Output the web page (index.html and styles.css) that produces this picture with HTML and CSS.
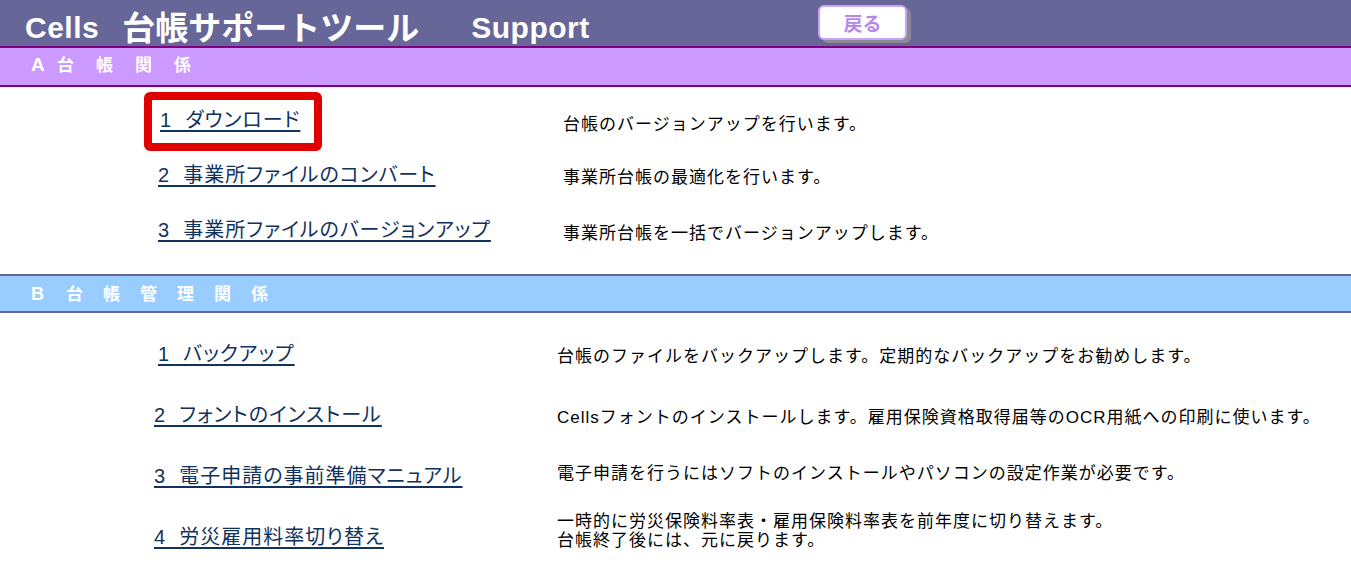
FILE: index.html
```html
<!DOCTYPE html>
<html lang="ja">
<head>
<meta charset="utf-8">
<title>Cells 台帳サポートツール Support</title>
<link rel="stylesheet" href="styles.css">
</head>
<body>
<header class="topbar">
  <h1 class="title"><span class="title-latin title-cells">Cells</span><span class="title-jp">台帳サポートツール</span><span class="title-latin">Support</span></h1>
  <a class="back-btn" href="#">戻る</a>
</header>

<section class="section section-a">
  <h2 class="section-head">
    <span class="section-letter">A</span><span>台</span><span>帳</span><span>関</span><span>係</span>
  </h2>
  <div class="rows rows-a">
    <div class="link-cell link-cell-boxed">
      <span class="highlight"><a class="item-link" href="#">1&nbsp;&nbsp;ダウンロード</a></span>
    </div>
    <p class="desc">台帳のバージョンアップを行います。</p>

    <div class="link-cell">
      <a class="item-link" href="#">2&nbsp;&nbsp;事業所ファイルのコンバート</a>
    </div>
    <p class="desc">事業所台帳の最適化を行います。</p>

    <div class="link-cell">
      <a class="item-link" href="#">3&nbsp;&nbsp;事業所ファイルのバージョンアップ</a>
    </div>
    <p class="desc">事業所台帳を一括でバージョンアップします。</p>
  </div>
</section>

<section class="section section-b">
  <h2 class="section-head">
    <span class="section-letter">B</span><span>台</span><span>帳</span><span>管</span><span>理</span><span>関</span><span>係</span>
  </h2>
  <div class="rows rows-b">
    <div class="link-cell link-cell-wide">
      <a class="item-link" href="#">1&nbsp;&nbsp;バックアップ</a>
    </div>
    <p class="desc">台帳のファイルをバックアップします。定期的なバックアップをお勧めします。</p>

    <div class="link-cell">
      <a class="item-link" href="#">2&nbsp;&nbsp;フォントのインストール</a>
    </div>
    <p class="desc">Cellsフォントのインストールします。雇用保険資格取得届等のOCR用紙への印刷に使います。</p>

    <div class="link-cell">
      <a class="item-link" href="#">3&nbsp;&nbsp;電子申請の事前準備マニュアル</a>
    </div>
    <p class="desc desc-raised">電子申請を行うにはソフトのインストールやパソコンの設定作業が必要です。</p>

    <div class="link-cell">
      <a class="item-link" href="#">4&nbsp;&nbsp;労災雇用料率切り替え</a>
    </div>
    <p class="desc desc-two"><span class="desc-line">一時的に労災保険料率表・雇用保険料率表を前年度に切り替えます。</span><span class="desc-line">台帳終了後には、元に戻ります。</span></p>
  </div>
</section>
</body>
</html>
```

FILE: styles.css
```css
html, body {
  margin: 0;
  padding: 0;
  background: #ffffff;
  overflow: hidden;
}

body {
  font-family: "Noto Sans CJK JP", "Liberation Sans", sans-serif;
  color: #000000;
}

/* ---------- top bar ---------- */
.topbar {
  display: grid;
  grid-template-columns: 793px 89px;
  align-items: start;
  height: 46px;
  padding-left: 25px;
  background: #666699;
  border-bottom: 2px solid #800080;
}

.title {
  margin: 2px 0 0 0;
  color: #ffffff;
  font-weight: bold;
  line-height: 44px;
  white-space: nowrap;
}

.title-latin {
  font-family: "Liberation Sans", "Noto Sans CJK JP", sans-serif;
  font-size: 30px;
  font-weight: bold;
  letter-spacing: 0.5px;
}

.title-cells {
  margin-right: 23px;
}

.title-jp {
  font-family: "Noto Sans CJK JP", sans-serif;
  font-size: 33px;
  font-weight: bold;
  margin-right: 52px;
  vertical-align: -2px;
}

.back-btn {
  box-sizing: border-box;
  display: flex;
  align-items: center;
  justify-content: center;
  margin-top: 5px;
  width: 89px;
  height: 35px;
  background: #ffffff;
  border: 2px solid #c9a3f7;
  border-radius: 6px;
  box-shadow: 4px 3px 0 #8a8a96;
  color: #b48ae8;
  font-family: "Noto Sans CJK JP", sans-serif;
  font-size: 19px;
  font-weight: bold;
  text-decoration: none;
  line-height: 1;
}

/* ---------- sections ---------- */
.section-head {
  box-sizing: border-box;
  margin: 0;
  display: flex;
  align-items: baseline;
  padding-left: 31px;
  color: #ffffff;
  font-family: "Noto Sans CJK JP", sans-serif;
  font-size: 17px;
  font-weight: bold;
}

.section-letter {
  font-family: "Liberation Sans", sans-serif;
  font-size: 19px;
}

.section-a .section-head {
  height: 39px;
  line-height: 31px;
  gap: 22px;
  background: #cc99ff;
  border-bottom: 2px solid #800080;
}

.section-a .section-letter {
  width: 4px;
}

.section-b .section-head {
  height: 39px;
  line-height: 34px;
  gap: 20px;
  background: #99ccff;
  border-top: 2px solid #666699;
  border-bottom: 2px solid #666699;
}

.section-b .section-letter {
  width: 15px;
  font-size: 18px;
}

/* ---------- rows ---------- */
.rows {
  display: grid;
  align-items: center;
}

.rows-a {
  grid-template-columns: 563px 1fr;
  grid-template-rows: 59px 47px 64px;
  padding-top: 5px;
  padding-bottom: 12px;
}

.rows-b {
  grid-template-columns: 557px 1fr;
  grid-auto-rows: 61px;
  padding-top: 10px;
}

.link-cell {
  padding-left: 158px;
  white-space: nowrap;
}

.rows-a .link-cell-boxed {
  padding-left: 144px;
}

.rows-b .link-cell {
  padding-left: 154px;
}

.rows-b .link-cell-wide {
  padding-left: 158px;
}

.highlight {
  display: inline-block;
  box-sizing: border-box;
  width: 178px;
  height: 59px;
  padding: 6px 8px 0 8px;
  border: 8px solid #e00000;
  border-radius: 6px;
}

.item-link {
  font-family: "Liberation Sans", "Noto Sans CJK JP", sans-serif;
  font-feature-settings: "palt";
  color: #12325e;
  font-size: 20px;
  letter-spacing: 1px;
  line-height: 28px;
  text-decoration: underline;
  text-decoration-thickness: 1.5px;
  text-underline-offset: 3px;
}

.desc {
  margin: 0;
  padding-top: 7px;
  font-family: "Liberation Sans", "Noto Sans CJK JP", sans-serif;
  font-size: 17px;
  letter-spacing: 1px;
  line-height: 18px;
  color: #000000;
  white-space: nowrap;
}

.rows-b .desc {
  padding-top: 6px;
}

.rows-b .desc-raised {
  padding-top: 0;
  padding-bottom: 3px;
}

.rows-b .desc-two {
  display: flex;
  flex-direction: column;
  padding-top: 0;
  padding-bottom: 12px;
}

.desc-line {
  display: block;
  line-height: 19px;
}
```
